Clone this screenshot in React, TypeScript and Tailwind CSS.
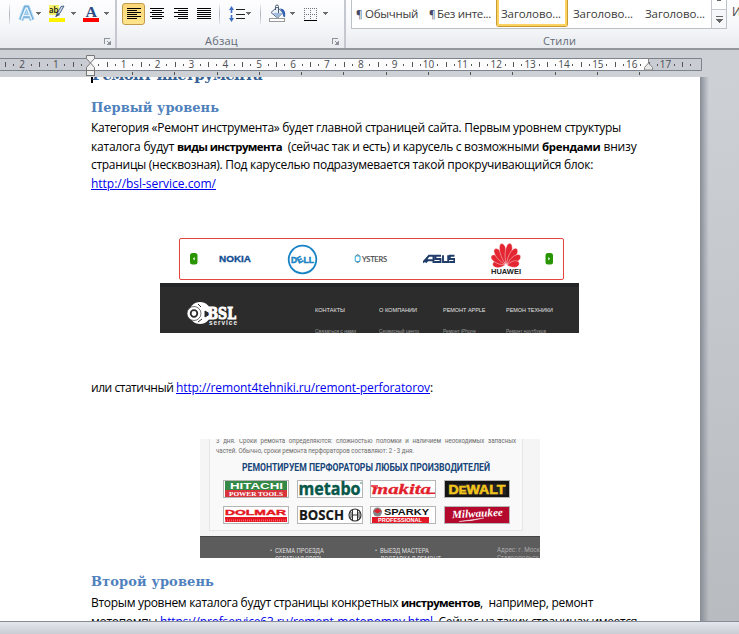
import { useLayoutEffect, useRef, type ReactNode } from "react";
import clsx from "clsx";

const body = "font-['Open_Sans','Noto_Sans',sans-serif]";
const serif = "font-['DejaVu_Serif','Liberation_Serif',serif]";

/** One run of text set to an exact width, by tracking or by condensing the glyphs. */
function Fit({ w, squeeze, className, children }: { w: number; squeeze?: boolean; className?: string; children: ReactNode }) {
  const ref = useRef<HTMLSpanElement>(null);
  useLayoutEffect(() => {
    const el = ref.current;
    if (!el) return;
    el.style.letterSpacing = "0px";
    el.style.transform = "none";
    const natural = el.getBoundingClientRect().width;
    const count = (el.textContent ?? "").length;
    if (squeeze) el.style.transform = `scaleX(${w / natural})`;
    else el.style.letterSpacing = `${(w - natural) / count}px`;
  }, [w, squeeze]);
  return (
    <span className={clsx("inline-block shrink-0 whitespace-pre", className)} style={{ width: w }}>
      <span ref={ref} className="inline-block origin-left [text-decoration:inherit]">{children}</span>
    </span>
  );
}

function Caret({ className }: { className?: string }) {
  return (
    <svg className={clsx("mt-3 shrink-0", className)} width="5" height="4" shapeRendering="crispEdges">
      <path d="M0 0h5v1H0zM1 1h3v1H1zM2 2h1v1H2z" fill="#6b6b6b" />
    </svg>
  );
}

function Separator({ className }: { className?: string }) {
  return <div className={clsx("mt-1 h-5 w-px shrink-0 bg-linear-to-b from-[#eef0f2] via-[#aeb3ba] to-[#e2e5e9]", className)} />;
}

function Launcher() {
  return (
    <svg className="mt-[10px]" width="8" height="8" shapeRendering="crispEdges">
      <path d="M0 0h6v1H1v5H0z" fill="#8d929b" />
      <path d="M7 3v4H3v-1h1v-1h1v-1h1v-1zM3 3h1v1h1v1h-1v-1h-1z" fill="#8d929b" />
    </svg>
  );
}

function AlignIcon({ kind, className }: { kind: "left" | "center" | "right" | "full"; className?: string }) {
  return (
    <svg className={clsx("shrink-0", className)} width="14" height="12" shapeRendering="crispEdges">
      {[0, 1, 2, 3, 4, 5].map((i) => {
        const w = kind === "full" || i % 2 === 0 ? 14 : 10;
        const x = kind === "right" ? 14 - w : kind === "center" ? (14 - w) / 2 : 0;
        return <rect key={i} x={x} y={i * 2} width={w} height="1" fill="#000" />;
      })}
    </svg>
  );
}

function Ribbon() {
  return (
    <header className={clsx(body, "flex h-[50px] shrink-0 overflow-hidden border-b-2 border-[#92969d] bg-linear-to-b from-[#fdfdfe] via-[#f7f8fa] to-[#e8ebef] text-[12px] text-[#3b3b3b]")}>
      <section className="flex w-[115px] shrink-0 flex-col">
        <div className="flex h-7 shrink-0">
          <Separator className="ml-[9px]" />
          <svg className="ml-2 mt-1 shrink-0" width="17" height="19">
            <path d="M3 16 7.600 3.500h1.800l4.600 12.500M5 12h7" fill="none" stroke="#b5dcf5" strokeWidth="5.500" strokeLinejoin="round" />
            <path d="M3 16 7.600 3.500h1.800l4.600 12.500M5 12h7" fill="none" stroke="#6fabd8" strokeWidth="3.600" />
            <path d="M3.200 15.700 8 4h1l4.700 11.700M5 11.500h7" fill="none" stroke="#e3f2fc" strokeWidth="1.700" />
          </svg>
          <Caret className="ml-[1px]" />
          <svg className="ml-2 mt-1 shrink-0" width="17" height="19">
            <rect y="1" width="10" height="10" fill="#f3f06a" />
            <path d="m15 2-4 7-4 3.500 1-3 4-7z" fill="#c8d6e8" stroke="#4b6687" />
            <path d="m9 9-3 4 5-2z" fill="#3d5069" />
            <text x="0" y="9" fontSize="9.500" fontWeight="600" fill="#111" textLength="9.500" lengthAdjust="spacingAndGlyphs">ab</text>
            <rect y="14" width="16" height="4" fill="#fff200" />
          </svg>
          <Caret className="ml-[5px]" />
          <svg className="ml-[7px] mt-1 shrink-0" width="16" height="19">
            <text x="2.500" y="12.500" fontFamily="Liberation Serif, serif" fontSize="15.500" fontWeight="700" fill="#2c4c86" textLength="11.500" lengthAdjust="spacingAndGlyphs">А</text>
            <rect y="14" width="16" height="4" fill="#fe0000" />
          </svg>
          <Caret className="ml-[5px]" />
        </div>
        <div className="ml-[104px]"><Launcher /></div>
      </section>
      <section className="flex w-[229px] shrink-0 flex-col border-l-2 border-l-[#c5c9cf]">
        <div className="flex h-7 shrink-0">
          <div className="ml-[5px] mt-[3px] flex h-[22px] w-[23px] shrink-0 items-center justify-center rounded-[3px] border border-[#c29b4a] bg-linear-to-b from-[#fbd77a] to-[#ffe48b]">
            <AlignIcon kind="left" />
          </div>
          <AlignIcon kind="center" className="ml-[5px] mt-2" />
          <AlignIcon kind="right" className="ml-[10px] mt-2" />
          <AlignIcon kind="full" className="ml-[9px] mt-2" />
          <Separator className="ml-2" />
          <svg className="ml-[9px] mt-[6px] shrink-0" width="16" height="16">
            <path d="M2.500 0 5 4H3.300v3H1.700V4H0zM2.500 16 5 12H3.300V9H1.700v3H0z" fill="#3d6ec4" />
            <path d="M7 3h9v1H7zM7 8h9v1H7zM7 12h9v1H7z" fill="#222" shapeRendering="crispEdges" />
          </svg>
          <Caret className="ml-[1px]" />
          <Separator className="ml-[9px]" />
          <svg className="ml-2 mt-1 shrink-0" width="17" height="19">
            <path d="M2 8.500 8 3l6 5.500-5.500 5.500z" fill="#e6eef7" stroke="#5a6c86" />
            <path d="M4 9h9l-4.500 4.500z" fill="#9db9dc" />
            <path d="M6.500 6V2.500a1.500 1.500 0 0 1 3 0V9" fill="none" stroke="#4b5c74" />
            <path d="M11 4.500c4 0 6 3 5 8.500-2 .6-2-2-2.500-4z" fill="#3464b0" />
            <rect x=".5" y="14.500" width="15" height="3" fill="#fff" stroke="#999" />
          </svg>
          <Caret className="ml-1" />
          <svg className="ml-[9px] mt-2 shrink-0" width="14" height="13" shapeRendering="crispEdges">
            <path d="M0 .5h14M0 6.500h14M.5 0v12M6.500 0v12M12.500 0v12" stroke="#6c7484" strokeDasharray="1 1" />
            <path d="M0 12h13v1H0z" fill="#000" />
          </svg>
          <Caret className="ml-[5px]" />
        </div>
        <div className="flex text-[11px] leading-[26px] text-[#646b77]">
          <Fit w={33} className="ml-[88px]">Абзац</Fit>
          <div className="ml-[94px]"><Launcher /></div>
        </div>
      </section>
      <section className="flex grow flex-col border-l-2 border-l-[#c5c9cf]">
        <div className="flex h-7 shrink-0">
          <div className="ml-[5px] flex h-[29px] w-[376px] shrink-0 border border-t-0 border-[#bcc1c8] bg-white text-[11.5px] leading-[28px]">
            <Fit w={9} className="ml-[4px] text-[10px] text-[#444a66]">¶</Fit>
            <Fit w={53}>Обычный</Fit>
            <Fit w={8} className="ml-[11px] text-[10px] text-[#444a66]">¶</Fit>
            <Fit w={54}>Без инте...</Fit>
            <div className="ml-[5px] h-[27px] w-[72px] shrink-0 rounded-b-[3px] border border-t-0 border-[#c79a35]">
              <div className="h-[26px] border-2 border-t-0 border-[#fbd35e] pl-[2px]">
                <Fit w={60}>Заголово...</Fit>
              </div>
            </div>
            <Fit w={60} className="ml-[5px]">Заголово...</Fit>
            <Fit w={60} className="ml-[12px]">Заголово...</Fit>
            <svg className="ml-auto shrink-0 border-l border-[#c5c9cf]" width="15" height="28" shapeRendering="crispEdges">
              <path d="M0 9h14v1H0z" fill="#c5c9cf" />
              <path d="M0 10h14v18H0z" fill="#f6f7f9" />
              <path d="M5 0h4v1H5zM4 16h7v1H4zM4 19h7v1H4zM5 20h5v1H5zM6 21h3v1H6zM7 22h1v1H7z" fill="#666" />
            </svg>
          </div>
          <span className="ml-[5px] mt-[3px] leading-[18px]">И</span>
        </div>
        <div className="flex pl-[197px] text-[11px] leading-[26px] text-[#646b77]"><Fit w={33}>Стили</Fit></div>
      </section>
    </header>
  );
}

const CM = 33.87;
const ZERO = 90.3;

function Ruler() {
  const units = Array.from({ length: 20 }, (_, i) => i - 2);
  return (
    <svg className="block shrink-0" width="739" height="27" fontFamily="'Open Sans', sans-serif">
      <rect y="8" width="702" height="13" fill="#c9ccd2" />
      <rect x="91" y="9" width="557" height="11" fill="#fcfcfd" />
      <path d="M0 8.500h701.500v12H0" fill="none" stroke="#7d838c" />
      {units.map((n) => (
        <g key={n}>
          {n !== 0 && (
            <text x={ZERO - 0.5 + n * CM} y="18.200" fontSize="10" fill="#4a4d52" textAnchor="middle">{Math.abs(n)}</text>
          )}
          {n < 17 && <rect x={Math.round(ZERO + n * CM + 8)} y="14" width="1" height="2" fill="#555" />}
          {n < 17 && <rect x={Math.round(ZERO + n * CM + 16.500)} y="12" width="1" height="5" fill="#555" />}
          {n < 17 && <rect x={Math.round(ZERO + n * CM + 24.500)} y="14" width="1" height="2" fill="#555" />}
        </g>
      ))}
      <rect x="674" y="14" width="1" height="2" fill="#555" />
      <rect x="682" y="12" width="1" height="5" fill="#555" />
      <rect x="690" y="14" width="1" height="2" fill="#555" />
      <rect x="5" y="12" width="1" height="5" fill="#555" />
      <rect x="13" y="14" width="1" height="2" fill="#555" />
      {Array.from({ length: 13 }, (_, i) => (
        <rect key={i} x={Math.round(132 + i * 42.270)} y="22" width="1" height="3" fill="#555" />
      ))}
      <path d="M86.500 5.500h8v3l-4 4.500 4 4.500v3h-8v-3l4-4.500-4-4.500z" fill="#f0f0f0" stroke="#777" />
      <rect x="86.500" y="20.500" width="8" height="5" fill="#f0f0f0" stroke="#777" />
      <path d="M648.500 8v5l4 4.500v2.500h-8v-2.500l4-4.500" fill="#e8e8e8" stroke="#888" />
    </svg>
  );
}

function GreenArrow({ flip }: { flip?: boolean }) {
  return (
    <svg width="8" height="12" className={clsx("shrink-0", flip && "-scale-x-100")}>
      <rect width="7.500" height="11.500" rx="2.500" fill="#289500" />
      <path d="M4.700 4v3.600L2.900 5.800z" fill="#fff" />
    </svg>
  );
}

const footerColumns = [
  { title: "КОНТАКТЫ", tw: 30, link: "Связаться с нами", lw: 41 },
  { title: "О КОМПАНИИ", tw: 38, link: "Сервисный центр", lw: 40 },
  { title: "РЕМОНТ APPLE", tw: 42.5, link: "Ремонт iPhone", lw: 33 },
  { title: "РЕМОН ТЕХНИКИ", tw: 47, link: "Ремонт ноутбуков", lw: 40 },
];

/** Petals of the fan-shaped mark: tilt from vertical, and length. */
const petals = [
  [-82, 12], [-56, 16], [-33, 18.5], [-11, 21],
  [11, 21], [33, 18.5], [56, 16], [82, 12],
];

function BrandCarousel() {
  return (
    <figure className="ml-[69px] flex h-[95px] w-[419px] flex-col overflow-hidden bg-white font-['Liberation_Sans',sans-serif]">
      <div className="ml-[19px] flex h-[42px] w-[385px] shrink-0 items-center rounded-[2px] border-[1.5px] border-[#e4463d] pl-[10px]">
        <GreenArrow />
        <svg className="ml-[21px] shrink-0" width="33" height="12">
          <text x="0" y="9" fontSize="9" fontWeight="700" fill="#124f92" stroke="#124f92" strokeWidth=".3" textLength="32" lengthAdjust="spacingAndGlyphs">NOKIA</text>
        </svg>
        <svg className="ml-[35px] shrink-0" width="31" height="31" fontSize="9" fontWeight="700">
          <circle cx="15.500" cy="15.500" r="13.800" fill="none" stroke="#1883c4" strokeWidth="1.800" />
          <g fill="#1883c4" stroke="#1883c4" strokeWidth=".5">
            <text x="4" y="18.700" textLength="6" lengthAdjust="spacingAndGlyphs">D</text>
            <text x="10" y="18.700" textLength="5.500" lengthAdjust="spacingAndGlyphs" transform="rotate(-28 12.800 15.500)">E</text>
            <text x="16.500" y="18.700" textLength="10.500" lengthAdjust="spacingAndGlyphs">LL</text>
          </g>
        </svg>
        <svg className="ml-[36px] shrink-0" width="34" height="12">
          <path d="M1.500 3.500Q3.500 0 6 3.500M1.500 8Q3.500 11 6 8" fill="none" stroke="#555" />
          <rect x="1.200" y="3" width="4.800" height="5.500" rx="1" fill="none" stroke="#29a9df" />
          <text x="8" y="8.500" fontFamily="Lato, sans-serif" fontSize="7.500" fill="#444" stroke="#444" strokeWidth=".15" textLength="25">YSTERS</text>
        </svg>
        <svg className="ml-[35px] shrink-0" width="32" height="10" viewBox="0 0 32 10">
          <path d="M0 8.500 6 1.800h4.500V9M2.500 8.500l3-3M4.500 6.200H10M18 1.800h-5.500v3.200h5V8H11.500M20 1.300V8h5.200V1.300M31.500 1.800H26.800v3.200h4.500V8H26.300" fill="none" stroke="#203d69" strokeWidth="1.900" />
        </svg>
        <svg className="ml-[35px] shrink-0" width="32" height="35">
          <g fill="#e32631">
            {petals.map(([angle, len]) => (
              <path key={angle} d={`M16 22.500C11 ${22.5 - len * 0.5} 12 ${22.5 - len} 15.500 ${22 - len}C20.500 ${22.5 - len} 20 ${22.5 - len * 0.5} 16 22.500`} transform={`rotate(${angle} 16 23.500)`} stroke="#fff" strokeWidth=".4" />
            ))}
          </g>
          <text x="1" y="31.500" fontSize="7" fontWeight="700" fill="#222" textLength="30" lengthAdjust="spacingAndGlyphs">HUAWEI</text>
        </svg>
        <span className="ml-[23px] flex shrink-0"><GreenArrow flip /></span>
      </div>
      <div className="mt-[3px] flex grow border-t-4 border-[#232526] bg-[#2c2c2c]">
        <svg className="ml-[27px] mt-[14px] shrink-0" width="52" height="28">
          <circle cx="13" cy="12" r="11" fill="#fff" />
          <circle cx="7" cy="12.500" r="7" fill="#fff" stroke="#333" strokeWidth=".7" />
          <circle cx="7" cy="12.500" r="3.300" fill="none" stroke="#2c2c2c" strokeWidth="1.800" />
          <path d="m11 3 3 3M11 21l4-3M18 10l5 3-5 3z" stroke="#2c2c2c" fill="#2c2c2c" />
          <text x="20.500" y="18" fontFamily="DejaVu Serif, serif" fontSize="16" fontWeight="700" fill="#fff" stroke="#fff" strokeWidth="1" textLength="28.500" lengthAdjust="spacingAndGlyphs">BSL</text>
          <text x="22" y="24" fontSize="6.500" fontWeight="700" fill="#eee" textLength="28">service</text>
        </svg>
        <div className="ml-[76px] grid grid-cols-[64px_64px_63px_60px] content-start text-[6px]">
          {footerColumns.map((c) => (
            <div key={c.title} className="flex flex-col">
              <Fit w={c.tw} squeeze className="mt-[19px] leading-[8px] text-[#e4e4e4]">{c.title}</Fit>
              <Fit w={c.lw} squeeze className="mt-[13px] leading-[8px] text-[#9b9b9b]">{c.link}</Fit>
            </div>
          ))}
        </div>
      </div>
    </figure>
  );
}

function LogoBox({ children, bg = "#fff" }: { children: ReactNode; bg?: string }) {
  return (
    <svg width="66" height="18" className="block" fontWeight="700" fontFamily="'Liberation Sans', sans-serif">
      <rect x=".5" y=".5" width="65" height="17" fill={bg} stroke="#b5b5b5" />
      {children}
    </svg>
  );
}

function BrandGrid() {
  return (
    <figure className="ml-[109px] flex h-[119px] w-[340px] flex-col overflow-hidden bg-[#f5f5f5] font-['Roboto',sans-serif]">
      <div className="ml-[9px] flex h-[92px] w-[314px] shrink-0 flex-col border border-t-0 border-[#e6e6e6] bg-[#f9f9f9] pl-[6px] text-[7px] text-[#6c6c6c]">
        <Fit w={300} squeeze className="mt-[-3px] leading-[10px] [word-spacing:2.5px]">3 дня. Сроки ремонта определяются: сложностью поломки и наличием необходимых запасных</Fit>
        <Fit w={198} squeeze className="leading-[10px]">частей. Обычно, сроки ремонта перфораторов составляют: 2 - 3 дня.</Fit>
        <Fit w={248} squeeze className="ml-[26px] mt-[5px] text-[10px] font-bold leading-[14px] text-[#17457a]">РЕМОНТИРУЕМ ПЕРФОРАТОРЫ ЛЮБЫХ ПРОИЗВОДИТЕЛЕЙ</Fit>
        <div className="ml-[7px] mt-[5px] grid w-[290px] grid-cols-[repeat(4,66px)] gap-x-[7.7px] gap-y-2">
          <LogoBox>
            <rect x="2" y="1" width="62" height="9" fill="#348947" />
            <rect x="2" y="10" width="62" height="7" fill="#d8343b" />
            <text x="7" y="9" fontSize="9" fill="#fff" textLength="53" lengthAdjust="spacingAndGlyphs">HITACHI</text>
            <text x="6" y="16" fontSize="6.500" fill="#fff" fontFamily="Liberation Serif, serif" textLength="54" lengthAdjust="spacingAndGlyphs">POWER TOOLS</text>
          </LogoBox>
          <LogoBox>
            <text x="1.500" y="15" fontSize="17" fill="#08584a" fontFamily="Open Sans, sans-serif" stroke="#08584a" strokeWidth=".4" textLength="62" lengthAdjust="spacingAndGlyphs">metabo</text>
            <circle cx="64" cy="3" r=".7" fill="#08584a" />
          </LogoBox>
          <LogoBox>
            <text x="2" y="14" fontSize="15" fontFamily="Liberation Serif, serif" fontStyle="italic" fill="#e21f2d" stroke="#e21f2d" strokeWidth=".3" textLength="59" lengthAdjust="spacingAndGlyphs">makita</text>
            <path d="M1 6h7M58 13.300h7" fill="none" stroke="#e21f2d" strokeWidth="1.400" />
          </LogoBox>
          <LogoBox bg="#151515">
            <rect x="4" y="4" width="58" height="11" fill="#222" />
            <text x="4.500" y="14" fontSize="12" fill="#f2c51c" stroke="#f2c51c" strokeWidth=".5" textLength="57" lengthAdjust="spacingAndGlyphs">D<tspan fontSize="10">E</tspan>WALT</text>
          </LogoBox>
          <LogoBox>
            <text x="2" y="9" fontSize="8" fill="#e51420" stroke="#e51420" strokeWidth=".4" textLength="61" lengthAdjust="spacingAndGlyphs">DOLMAR</text>
            <rect x="2" y="11" width="62" height="5" fill="#e51420" />
            <path d="M2 14.500H64" stroke="#ff9a9e" strokeWidth="2" strokeDasharray=".6 1.400" />
          </LogoBox>
          <LogoBox>
            <text x="2" y="14.300" fontSize="14.500" fontFamily="Open Sans, sans-serif" fill="#181818" stroke="#181818" strokeWidth=".2" textLength="45" lengthAdjust="spacingAndGlyphs">BOSCH</text>
            <circle cx="58" cy="9" r="6" fill="#fff" stroke="#333" strokeWidth="1.200" />
            <path d="M55.500 4v10M60.500 4v10M55.500 9h5M54 6v6M62 6v6" stroke="#333" fill="none" />
          </LogoBox>
          <LogoBox>
            <circle cx="7.500" cy="6" r="4.500" fill="#858585" />
            <path d="m3.500 5 4-2.500 4 2.500-4 2.500z" fill="#da2530" />
            <text x="14" y="9" fontSize="9.500" fill="#111" textLength="45" lengthAdjust="spacingAndGlyphs">SPARKY</text>
            <rect x="2" y="11" width="57" height="6" fill="#e21826" />
            <text x="8" y="16" fontSize="5.500" fill="#fff" textLength="44" lengthAdjust="spacingAndGlyphs">PROFESSIONAL</text>
          </LogoBox>
          <LogoBox bg="#b5082d">
            <text x="8" y="11" fontSize="11" fontFamily="Liberation Serif, serif" fontStyle="italic" fill="#fff" transform="rotate(-3 33 9)" textLength="51" lengthAdjust="spacingAndGlyphs">Milwaukee</text>
            <path d="M15 15.500 40 12l-12 2.500z" fill="#fff" stroke="#fff" strokeWidth=".4" />
          </LogoBox>
        </div>
      </div>
      <div className="mt-[5px] flex h-[22px] shrink-0 overflow-hidden border-t border-[#444] bg-[#5c5c5c] text-[7.5px] leading-[8px] text-[#dedede]">
        <div className="ml-[70px] mt-[10px] flex w-[106px] flex-col">
          <Fit w={54} squeeze>•  СХЕМА ПРОЕЗДА</Fit>
          <Fit w={48} squeeze className="ml-[5px]">ОБРАТНАЯ СВЯЗЬ</Fit>
        </div>
        <div className="mt-[10px] flex w-[123px] flex-col">
          <Fit w={54} squeeze>•  ВЫЕЗД МАСТЕРА</Fit>
          <Fit w={61} squeeze className="ml-[5px]">ДОСТАВКА В РЕМОНТ</Fit>
        </div>
        <div className="mt-[9px] flex flex-col text-[#aaa]">
          <Fit w={43} squeeze>Адрес: г. Моск</Fit>
          <Fit w={42} squeeze>Ставропольск</Fit>
        </div>
      </div>
    </figure>
  );
}

const link = "text-[#0000ee] underline";
const strong = "text-[11.4px] font-bold";

export default function App() {
  return (
    <div className="flex h-[634px] w-[739px] flex-col overflow-hidden bg-[#cdd0d5]">
      <Ribbon />
      <Ruler />
      <main className="flex h-[544px] shrink-0 bg-linear-to-b from-[#cdd0d5] to-[#b8bcc0]">
        <article className={clsx(body, "flex h-[544px] w-[700px] shrink-0 flex-col overflow-hidden bg-white pl-[91px] text-[12px] text-black")}>
          <div className="mt-[-12px] flex h-5 shrink-0">
            <div className="h-[18px] w-[2px] bg-black" />
            <Fit w={170} className={clsx(serif, "ml-[-1px] text-[15px] font-bold leading-5 text-[#366091]")}>Ремонт инструмента</Fit>
          </div>
          <h2 className={clsx(serif, "mt-[13px] flex h-5 shrink-0 text-[13px] font-bold leading-5 text-[#4f81bd]")}><Fit w={128}>Первый уровень</Fit></h2>
          <p className="flex h-[75px] shrink-0 flex-col leading-[19px]">
            <span className="flex h-[19px]"><Fit w={530}>Категория «Ремонт инструмента» будет главной страницей сайта. Первым уровнем структуры</Fit></span>
            <span className="flex h-[18px]">
              <Fit w={86}>каталога будут </Fit>
              <Fit w={105} className={strong}>виды инструмента</Fit>
              <Fit w={260}>  (сейчас так и есть) и карусель с возможными </Fit>
              <Fit w={58.500} className={strong}>брендами</Fit>
              <Fit w={36}> внизу</Fit>
            </span>
            <span className="flex h-[19px]"><Fit w={502}>страницы (несквозная). Под каруселью подразумевается такой прокручивающийся блок:</Fit></span>
            <span className="flex h-[19px]"><Fit w={125} className={link}>http://bsl-service.com/</Fit></span>
          </p>
          <div className="mt-[45px] shrink-0"><BrandCarousel /></div>
          <p className="mt-[45px] flex h-[19px] shrink-0 leading-[19px]">
            <Fit w={85}>или статичный </Fit>
            <Fit w={254} className={link}>http://remont4tehniki.ru/remont-perforatorov</Fit>
            <Fit w={4}>:</Fit>
          </p>
          <div className="mt-[42px] shrink-0"><BrandGrid /></div>
          <h2 className={clsx(serif, "mt-[14px] flex h-5 shrink-0 text-[13px] font-bold leading-5 text-[#4f81bd]")}><Fit w={123}>Второй уровень</Fit></h2>
          <p className="mt-[1px] flex shrink-0 flex-col leading-[19px]">
            <span className="flex h-[19px]">
              <Fit w={310}>Вторым уровнем каталога будут страницы конкретных </Fit>
              <Fit w={79} className={strong}>инструментов</Fit>
              <Fit w={113}>,  например, ремонт</Fit>
            </span>
            <span className="flex h-[19px]">
              <Fit w={69}>мотопомпы </Fit>
              <Fit w={273} className={link}>https://profservice63.ru/remont-motopompy.html</Fit>
              <Fit w={204}>. Сейчас на таких страницах имеется</Fit>
            </span>
          </p>
        </article>
        <div className="w-[9px] bg-linear-to-r from-[#878c96] to-transparent" />
      </main>
      <footer className="h-[13px] shrink-0 border-t border-[#868b9a] bg-linear-to-b from-[#e4e7ec] to-[#c9ccd2]" />
    </div>
  );
}
